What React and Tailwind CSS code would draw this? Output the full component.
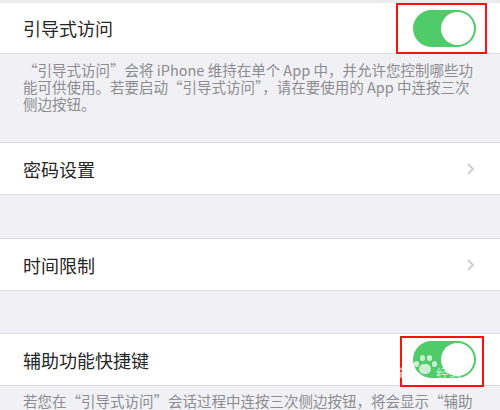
import React from "react";

const font = { fontFamily: '"Noto Sans CJK SC", "Noto Sans", sans-serif' };

function Toggle() {
  return (
    <div className="w-[63px] h-[37px] rounded-full bg-[#4fcb6a] flex items-center justify-end pr-[2px]">
      <div className="w-[33px] h-[33px] rounded-full bg-white" />
    </div>
  );
}

function Chevron() {
  return (
    <svg width="8" height="12" viewBox="0 0 8 12" className="mr-[1px]">
      <path d="M1.5 1.5 L6 6 L1.5 10.5" fill="none" stroke="#c4c4c9" strokeWidth="1.7" strokeLinecap="round" strokeLinejoin="round" />
    </svg>
  );
}

function Row({ label, right, first = false }) {
  return (
    <div className={`bg-white flex items-center justify-between pl-[23px] pr-[24px] border-b border-[#dcdce0] ${first ? "h-[51px]" : "h-[53px] border-t"}`}>
      <span className="text-[18px] text-[#262626] leading-none">{label}</span>
      {right}
    </div>
  );
}

export default function App() {
  return (
    <div className="relative w-[500px] h-[410px] overflow-hidden bg-[#f1f1f5]" style={font}>
      <div className="h-[3px] bg-[#ececf0]" />
      <Row label="引导式访问" right={<Toggle />} first />
      <div className="h-[88px] pl-[23px] pt-[7px] text-[14.5px] leading-[17px] text-[#8c8c91] whitespace-nowrap flex flex-col">
        <span>“引导式访问”会将 iPhone 维持在单个 App 中，并允许您控制哪些功</span>
        <span>能可供使用。若要启动“引导式访问”，请在要使用的 App 中连按三次</span>
        <span>侧边按钮。</span>
      </div>
      <Row label="密码设置" right={<Chevron />} />
      <div className="h-[43px]" />
      <Row label="时间限制" right={<Chevron />} />
      <div className="h-[42px]" />
      <Row label="辅助功能快捷键" right={<Toggle />} />
      <div className="pl-[23px] pt-[6px] text-[14.5px] leading-[17px] text-[#8c8c91] whitespace-nowrap">
        若您在“引导式访问”会话过程中连按三次侧边按钮，将会显示“辅助
      </div>

      {/* annotation boxes */}
      <div className="absolute left-[396px] top-[3px] w-[91px] h-[51px] border-2 border-[#ff1010]" />
      <div className="absolute left-[400px] top-[336px] w-[84px] h-[51px] border-2 border-[#ff1010]" />

      {/* watermark */}
      <div className="absolute left-[413px] top-[353px] w-[24px] h-[24px] opacity-70">
        <div className="absolute left-[1px] top-[8px] w-[5px] h-[6px] rounded-full bg-white" />
        <div className="absolute left-[7px] top-[2px] w-[5px] h-[6px] rounded-full bg-white" />
        <div className="absolute left-[14px] top-[2px] w-[5px] h-[6px] rounded-full bg-white" />
        <div className="absolute left-[19px] top-[8px] w-[5px] h-[6px] rounded-full bg-white" />
        <div className="absolute left-[6px] top-[11px] w-[12px] h-[10px] rounded-full bg-white" />
      </div>
      <div className="absolute left-[384px] top-[361px] text-[20px] leading-none font-bold text-white opacity-60" style={{ fontFamily: '"Liberation Sans", sans-serif' }}>
        Bai
      </div>
      <div className="absolute left-[436px] top-[366px] text-[13px] leading-none text-white opacity-70">
        经验
      </div>
    </div>
  );
}
